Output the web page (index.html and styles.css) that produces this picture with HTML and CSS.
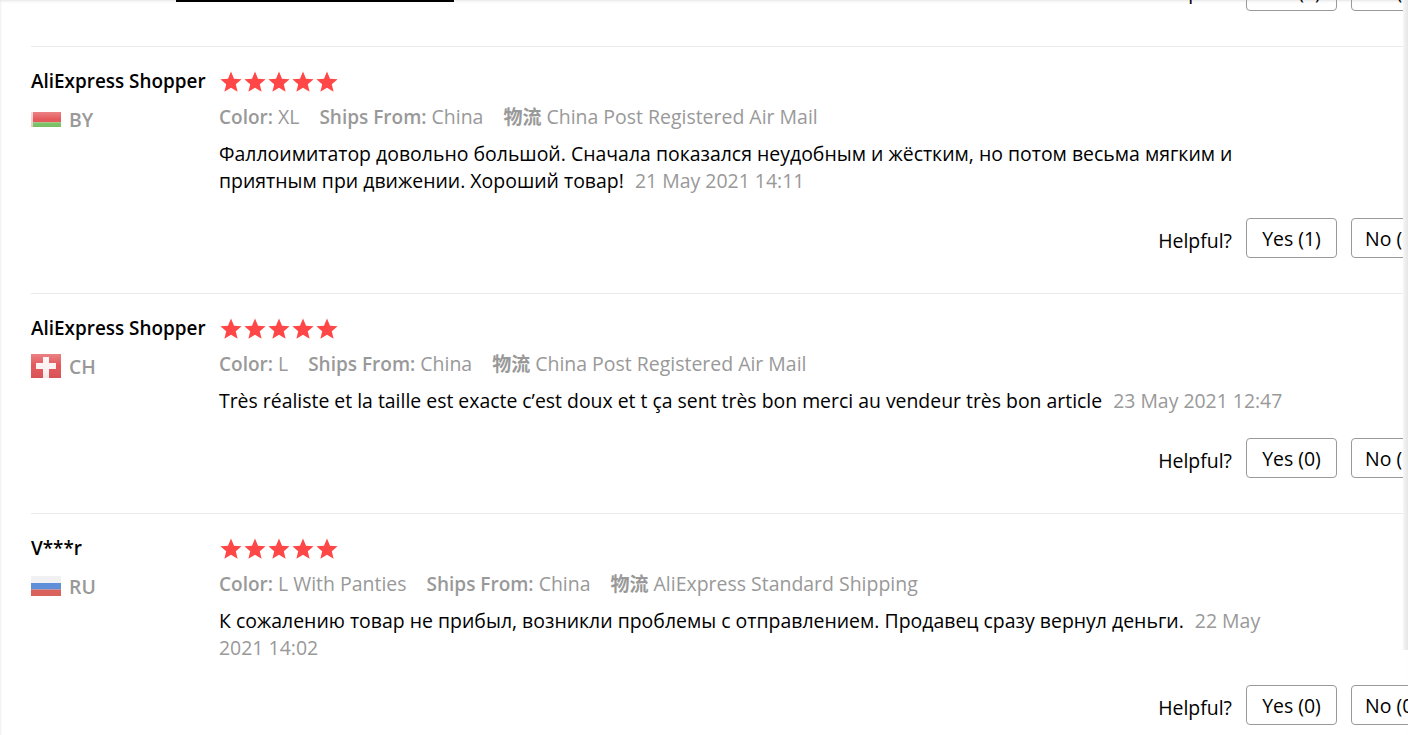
FILE: index.html
```html
<!DOCTYPE html>
<html lang="en">
<head>
<meta charset="utf-8">
<title>Reviews</title>
<link rel="stylesheet" href="styles.css">
</head>
<body>
<svg class="defs" width="0" height="0" aria-hidden="true"><defs>
<polygon id="star" points="11,0.5 14,7.7 21.6,8.3 15.8,13.3 17.6,20.8 11,16.8 4.4,20.8 6.2,13.3 0.4,8.3 8,7.7"/>
<linearGradient id="gloss" x1="0" y1="0" x2="0" y2="1"><stop offset="0" stop-color="#fff" stop-opacity=".25"/><stop offset=".5" stop-color="#fff" stop-opacity="0"/><stop offset="1" stop-color="#000" stop-opacity=".06"/></linearGradient>
</defs></svg>
<div class="page">
  <div class="tab-line"></div>
  <div class="edge-right"></div>
  <div class="peek">
    <div class="helpful">
      <span class="helpful-label">Helpful?</span>
      <span class="btn">Yes (1)</span>
      <span class="btn btn-no">No (0)</span>
    </div>
  </div>

  <article class="review">
    <div class="user">
      <div class="name">AliExpress Shopper</div>
      <div class="country">
        <svg class="flag flag-by" viewBox="0 0 30 16" preserveAspectRatio="none"><rect width="30" height="11" fill="#e5595c"/><rect y="11" width="30" height="5" fill="#7dc86a"/><rect width="2" height="16" fill="#f6d0d0"/><rect width="30" height="16" fill="url(#gloss)"/></svg>
        <span>BY</span>
      </div>
    </div>
    <div class="body">
      <div class="stars"><svg viewBox="0 0 22 22"><use href="#star"/></svg><svg viewBox="0 0 22 22"><use href="#star"/></svg><svg viewBox="0 0 22 22"><use href="#star"/></svg><svg viewBox="0 0 22 22"><use href="#star"/></svg><svg viewBox="0 0 22 22"><use href="#star"/></svg></div>
      <div class="info"><span class="attr"><b>Color:</b> XL</span><span class="attr"><b>Ships From:</b> China</span><span class="attr"><b class="cjk">物流</b> China Post Registered Air Mail</span></div>
      <p class="text">Фаллоимитатор довольно большой. Сначала показался неудобным и жёстким, но потом весьма мягким и приятным при движении. Хороший товар!<time>21 May 2021 14:11</time></p>
      <div class="helpful">
        <span class="helpful-label">Helpful?</span>
        <span class="btn">Yes (1)</span>
        <span class="btn btn-no">No (0)</span>
      </div>
    </div>
  </article>

  <article class="review">
    <div class="user">
      <div class="name">AliExpress Shopper</div>
      <div class="country">
        <svg class="flag flag-ch" viewBox="0 0 30 24" preserveAspectRatio="none"><rect width="30" height="24" fill="#e2575a"/><path d="M12 3h6v6h7v6h-7v9h-6v-9H5V9h7z" fill="#fdf3f3"/><rect width="30" height="24" fill="url(#gloss)"/></svg>
        <span>CH</span>
      </div>
    </div>
    <div class="body">
      <div class="stars"><svg viewBox="0 0 22 22"><use href="#star"/></svg><svg viewBox="0 0 22 22"><use href="#star"/></svg><svg viewBox="0 0 22 22"><use href="#star"/></svg><svg viewBox="0 0 22 22"><use href="#star"/></svg><svg viewBox="0 0 22 22"><use href="#star"/></svg></div>
      <div class="info"><span class="attr"><b>Color:</b> L</span><span class="attr"><b>Ships From:</b> China</span><span class="attr"><b class="cjk">物流</b> China Post Registered Air Mail</span></div>
      <p class="text text-latin">Très réaliste et la taille est exacte c’est doux et t ça sent très bon merci au vendeur très bon article<time>23 May 2021 12:47</time></p>
      <div class="helpful">
        <span class="helpful-label">Helpful?</span>
        <span class="btn">Yes (0)</span>
        <span class="btn btn-no">No (0)</span>
      </div>
    </div>
  </article>

  <article class="review">
    <div class="user">
      <div class="name">V***r</div>
      <div class="country">
        <svg class="flag flag-ru" viewBox="0 0 30 20" preserveAspectRatio="none"><rect width="30" height="7" fill="#f1f1f4"/><rect y="7" width="30" height="6.5" fill="#5f8fd8"/><rect y="13.5" width="30" height="6.5" fill="#d9625c"/></svg>
        <span>RU</span>
      </div>
    </div>
    <div class="body">
      <div class="stars"><svg viewBox="0 0 22 22"><use href="#star"/></svg><svg viewBox="0 0 22 22"><use href="#star"/></svg><svg viewBox="0 0 22 22"><use href="#star"/></svg><svg viewBox="0 0 22 22"><use href="#star"/></svg><svg viewBox="0 0 22 22"><use href="#star"/></svg></div>
      <div class="info"><span class="attr"><b>Color:</b> L With Panties</span><span class="attr"><b>Ships From:</b> China</span><span class="attr"><b class="cjk">物流</b> AliExpress Standard Shipping</span></div>
      <p class="text">К сожалению товар не прибыл, возникли проблемы с отправлением. Продавец сразу вернул деньги.<time>22 May 2021 14:02</time></p>
      <div class="helpful">
        <span class="helpful-label">Helpful?</span>
        <span class="btn">Yes (0)</span>
        <span class="btn btn-no">No (0)</span>
      </div>
    </div>
  </article>
</div>
</body>
</html>
```
FILE: styles.css
```css
* { box-sizing: border-box; }
html, body { margin: 0; height: 100%; overflow: hidden; background: #fff; }
body { font-family: "Open Sans", "Noto Sans CJK SC", sans-serif; color: #000; }
.defs { position: absolute; }
.page {
  position: relative;
  width: 1408px;
  height: 735px;
  overflow: hidden;
  padding-left: 31px;
  box-shadow: inset 0 3px 3px -2px #e4e4e4, inset 2px 0 2px -1px #f0f0f0;
}
.tab-line { position: absolute; left: 176px; top: 0; width: 278px; height: 2px; background: #000; }
.edge-right {
  position: absolute; right: 0; top: 0; width: 5px; height: 650px;
  background: linear-gradient(to right, #f6f6f6, #e6e6e6);
  z-index: 1;
}
.peek { height: 46px; position: relative; }
.peek .helpful { position: absolute; left: 0; bottom: 35px; width: 1406px; margin: 0; }
.peek .helpful-label { padding-top: 0; }
.review {
  display: flex;
  width: 1406px;
  border-top: 1px solid #ebebeb;
  padding-top: 21px;
  padding-bottom: 35px;
}
.user { width: 188px; flex: none; }
.name { font-size: 18.9px; line-height: 26px; font-weight: 600; white-space: nowrap; }
.country { display: flex; align-items: center; height: 24px; margin-top: 13px; font-size: 19.4px; font-weight: 600; color: #999; }
.country span { margin-left: 8px; }
.flag { display: block; width: 30px; flex: none; filter: blur(0.5px); }
.flag-by { height: 15px; }
.flag-ch { height: 24px; }
.flag-ru { height: 20px; }
.body { flex: 1; min-width: 0; }
.stars { display: flex; height: 22px; margin: 3px 0 0 1px; }
.stars svg { width: 22px; height: 22px; margin-right: 2px; fill: #ff4747; display: block; }
.info { display: flex; height: 26px; margin-top: 11px; font-size: 19.45px; line-height: 26px; color: #999; white-space: nowrap; }
.attr { margin-right: 20px; }
.attr b { font-size: 19px; font-weight: 600; }
.attr .cjk { font-family: "Noto Sans CJK SC", sans-serif; font-weight: 700; line-height: 0; }
.text { width: 1071px; margin: 10px 0 0; font-size: 19.47px; line-height: 27px; }
.text-latin { font-size: 19.41px; }
.text time { margin-left: 11px; color: #999; }
.helpful { display: flex; align-items: center; justify-content: flex-end; margin-top: 24px; height: 40px; font-size: 19.47px; }
.helpful-label { margin-right: 14px; padding-top: 4px; }
.btn {
  display: flex; align-items: center; justify-content: center;
  width: 91px; height: 40px;
  border: 1px solid #999; border-radius: 4px;
  white-space: nowrap;
}
.btn-no { margin-left: 14px; width: 86px; justify-content: flex-start; padding-left: 13px; }
```
